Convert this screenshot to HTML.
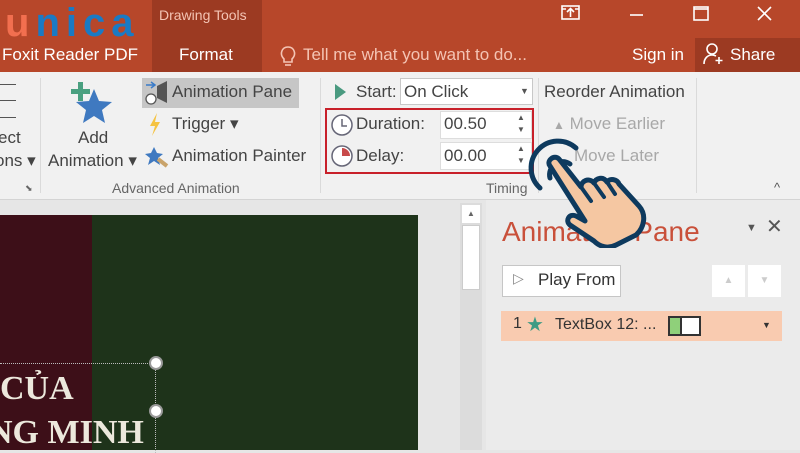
<!DOCTYPE html>
<html><head><meta charset="utf-8"><style>
*{margin:0;padding:0;box-sizing:border-box}
body{width:800px;height:450px;overflow:hidden;position:relative;font-family:"Segoe UI","Liberation Sans",sans-serif;background:#e6e6e6}
.a{position:absolute;white-space:nowrap}
.t{color:#444;font-size:17px}
.g{color:#a8a8a8;font-size:17px}
</style></head><body>
<div class="a" style="left:0;top:0;width:800px;height:72px;background:#b7472a"></div>
<div class="a" style="left:152px;top:0;width:110px;height:72px;background:#9c3a22"></div>
<div class="a" style="left:695px;top:38px;width:105px;height:34px;background:#9c3a22"></div>
<div class="a" style="left:5px;top:-1px;font-size:40px;line-height:48px;font-weight:bold;letter-spacing:6px;font-family:'Liberation Sans',sans-serif"><span style="color:#f26f4f">u</span><span style="color:#1a7ac4">nica</span></div>
<div class="a" style="left:159px;top:7px;color:#f4c4b4;font-size:14px">Drawing Tools</div>
<div class="a" style="left:2px;top:45px;color:#fff;font-size:17px">Foxit Reader PDF</div>
<div class="a" style="left:179px;top:45px;color:#fff;font-size:17px">Format</div>
<svg class="a" style="left:280px;top:45px" width="16" height="22" fill="none" stroke="#f4c4b4" stroke-width="1.6"><path d="M4 14c-5-5-2-12 4-12s9 7 4 12v3H4z"/><path d="M5 20h6"/></svg>
<div class="a" style="left:303px;top:45px;color:#f4c4b4;font-size:17px">Tell me what you want to do...</div>
<div class="a" style="left:632px;top:45px;color:#fff;font-size:17px">Sign in</div>
<div class="a" style="left:730px;top:45px;color:#fff;font-size:17px">Share</div>
<svg class="a" style="left:702px;top:42px" width="24" height="24" viewBox="0 0 24 24" fill="none" stroke="#fff" stroke-width="1.6"><circle cx="10" cy="7" r="5"/><path d="M2 22c0-6 4-9 8-9 2 0 3 .5 4 1M17 15v7M13.5 18.5h7"/></svg>
<svg class="a" style="left:560px;top:5px" width="220" height="20" fill="none" stroke="#fff" stroke-width="1.6"><rect x="2" y="1" width="17" height="13"/><path d="M10.5 12V4M7 7l3.5-3.5L14 7M2 4h4M15 4h4"/><path d="M70 10h13"/><rect x="134" y="2" width="14" height="13"/><path d="M134 4h14"/><path d="M198 2l13 13M211 2l-13 13"/></svg>
<div class="a" style="left:0;top:72px;width:800px;height:128px;background:#f1f1f1;border-bottom:1px solid #d4d4d4"></div>
<div class="a" style="left:40px;top:78px;width:1px;height:115px;background:#dadada"></div>
<div class="a" style="left:320px;top:78px;width:1px;height:115px;background:#dadada"></div>
<div class="a" style="left:538px;top:78px;width:1px;height:115px;background:#dadada"></div>
<div class="a" style="left:696px;top:78px;width:1px;height:115px;background:#dadada"></div>
<div class="a" style="left:0;top:84px;width:16px;height:1px;background:#555;box-shadow:0 16px 0 #555,0 33px 0 #555"></div>
<div class="a t" style="left:-2px;top:128px">ect</div>
<div class="a t" style="left:-5px;top:151px">ons ▾</div>
<div class="a" style="left:25px;top:183px;font-size:9px;color:#666">⬊</div>
<svg class="a" style="left:70px;top:82px" width="46" height="44"><path d="M24 7l5 12 13 1-10 8 3 13-11-7-11 7 3-13-10-8 13-1z" fill="#3f79c0"/><path d="M8 0h5v7h7v5h-7v7h-5v-7h-7v-5h7z" fill="#4aa080"/></svg>
<div class="a t" style="left:78px;top:128px">Add</div>
<div class="a t" style="left:48px;top:151px">Animation ▾</div>
<div class="a" style="left:142px;top:78px;width:157px;height:30px;background:#c6c6c6"></div>
<svg class="a" style="left:145px;top:80px" width="24" height="26"><path d="M1 5h9M6 2l4 3-4 3" stroke="#3a7bc8" stroke-width="1.5" fill="none"/><path d="M12 6l10-5v22l-10-5z" fill="#555"/><circle cx="6" cy="19" r="5" fill="#fff" stroke="#555" stroke-width="1.3"/></svg>
<div class="a t" style="left:172px;top:82px">Animation Pane</div>
<svg class="a" style="left:148px;top:113px" width="14" height="24"><path d="M9 0L2 13h5l-3 10 8-14H7z" fill="#f5c342"/></svg>
<div class="a t" style="left:172px;top:114px">Trigger ▾</div>
<svg class="a" style="left:145px;top:146px" width="24" height="22"><path d="M9 1l3 6 6 1-5 4 2 7-6-4-6 4 2-7-5-4 6-1z" fill="#3f79c0"/><path d="M13 13l9 7" stroke="#c9a36a" stroke-width="4"/></svg>
<div class="a t" style="left:172px;top:146px">Animation Painter</div>
<div class="a" style="left:112px;top:180px;color:#666;font-size:14px">Advanced Animation</div>
<svg class="a" style="left:334px;top:84px" width="12" height="16"><path d="M1 0l11 8-11 8z" fill="#4a9a80"/></svg>
<div class="a t" style="left:356px;top:82px">Start:</div>
<div class="a" style="left:400px;top:78px;width:133px;height:27px;background:#fff;border:1px solid #c8c8c8"></div>
<div class="a t" style="left:404px;top:82px">On Click</div>
<div class="a" style="left:520px;top:86px;font-size:9px;color:#555">▼</div>
<div class="a" style="left:325px;top:108px;width:209px;height:66px;border:2px solid #c8202a"></div>
<svg class="a" style="left:330px;top:113px" width="24" height="56" fill="#fff" stroke="#667" stroke-width="1.5"><circle cx="12" cy="12" r="10"/><path d="M12 6v7h5" fill="none"/><circle cx="12" cy="43" r="10"/><path d="M12 43V35a8 8 0 0 1 8 8z" fill="#c84a4a" stroke="none"/></svg>
<div class="a t" style="left:356px;top:114px">Duration:</div>
<div class="a t" style="left:356px;top:146px">Delay:</div>
<div class="a" style="left:440px;top:111px;width:92px;height:28px;background:#fff;border:1px solid #ddd"></div>
<div class="a" style="left:440px;top:142px;width:92px;height:28px;background:#fff;border:1px solid #ddd"></div>
<div class="a t" style="left:444px;top:114px">00.50</div>
<div class="a t" style="left:444px;top:146px">00.00</div>
<div class="a" style="left:517px;top:112px;font-size:8px;color:#555;line-height:12px">▲<br>▼</div>
<div class="a" style="left:517px;top:143px;font-size:8px;color:#555;line-height:12px">▲<br>▼</div>
<div class="a" style="left:486px;top:180px;color:#666;font-size:14px">Timing</div>
<div class="a t" style="left:544px;top:82px">Reorder Animation</div>
<div class="a g" style="left:553px;top:114px"><span style="font-size:12px">▲</span> Move Earlier</div>
<div class="a g" style="left:574px;top:146px">Move Later</div>
<div class="a" style="left:774px;top:180px;color:#555;font-size:13px">^</div>
<div class="a" style="left:0;top:215px;width:92px;height:235px;background:#3d0f18"></div>
<div class="a" style="left:92px;top:215px;width:326px;height:235px;background:#1e331a"></div>
<div class="a" style="left:0;top:363px;width:156px;border-top:1px dotted #bbb"></div>
<div class="a" style="left:155px;top:363px;height:90px;border-left:1px dotted #bbb"></div>
<div class="a" style="left:149px;top:356px;width:14px;height:14px;border-radius:50%;background:#fff;border:2px solid #999"></div>
<div class="a" style="left:149px;top:404px;width:14px;height:14px;border-radius:50%;background:#fff;border:2px solid #999"></div>
<div class="a" style="left:0;top:370px;color:#ece8dc;font-size:34px;font-weight:bold;font-family:'Liberation Serif',serif">CỦA</div>
<div class="a" style="left:-12px;top:414px;color:#ece8dc;font-size:34px;font-weight:bold;font-family:'Liberation Serif',serif">NG MINH</div>
<div class="a" style="left:460px;top:203px;width:22px;height:247px;background:#dcdcdc"></div>
<div class="a" style="left:462px;top:205px;width:18px;height:18px;background:#fff;font-size:8px;color:#666;text-align:center;line-height:18px">▲</div>
<div class="a" style="left:462px;top:225px;width:18px;height:65px;background:#fff;border:1px solid #ccc"></div>
<div class="a" style="left:486px;top:200px;width:314px;height:250px;background:#ebebeb"></div>
<div class="a" style="left:502px;top:216px;color:#c9503a;font-size:28px">Animation Pane</div>
<div class="a" style="left:746px;top:222px;color:#555;font-size:11px">▼</div>
<div class="a" style="left:766px;top:214px;color:#555;font-size:20px">✕</div>
<div class="a" style="left:502px;top:265px;width:119px;height:32px;background:#fff;border:1px solid #c6c6c6"></div>
<div class="a" style="left:513px;top:270px;color:#888;font-size:14px">▷</div>
<div class="a" style="left:538px;top:270px;color:#333;font-size:17px">Play From</div>
<div class="a" style="left:712px;top:265px;width:33px;height:32px;background:#fff;color:#ccc;font-size:10px;text-align:center;line-height:32px">▲</div>
<div class="a" style="left:748px;top:265px;width:33px;height:32px;background:#fff;color:#ccc;font-size:10px;text-align:center;line-height:32px">▼</div>
<div class="a" style="left:501px;top:311px;width:281px;height:30px;background:#f9cbb0"></div>
<div class="a" style="left:513px;top:315px;color:#333;font-size:16px">1</div>
<div class="a" style="left:526px;top:312px;color:#3e9b84;font-size:20px">★</div>
<div class="a" style="left:555px;top:316px;color:#333;font-size:16px">TextBox 12: ...</div>
<div class="a" style="left:668px;top:316px;width:33px;height:20px;border:2px solid #333;background:#fff"><div style="width:12px;height:16px;background:#8fd07a;border-right:2px solid #333"></div></div>
<div class="a" style="left:762px;top:320px;color:#333;font-size:9px">▼</div>
<svg class="a" style="left:520px;top:128px" width="160" height="120" fill="none" stroke-linecap="round" stroke-linejoin="round">
<path d="M20 60a26 26 0 0 1 36-40" stroke="#0e3a5e" stroke-width="5"/>
<path d="M30 50a13 13 0 0 1 20-14" stroke="#0e3a5e" stroke-width="5"/>
<path d="M30 38c-4-5 4-12 9-7l22 28c0-6 8-10 13-4c2-5 9-7 13-1c3-4 10-3 12 2l20 22c8 9 5 22-3 29l-20 10c-8 4-16 2-22-4l-24-16c-5-4-1-12 6-9l9 5z" fill="#f5c7a2" stroke="#0e3a5e" stroke-width="5"/>
<path d="M61 59l10 14M74 55l10 14M87 54l8 12" stroke="#0e3a5e" stroke-width="4"/>
</svg>
</body></html>
